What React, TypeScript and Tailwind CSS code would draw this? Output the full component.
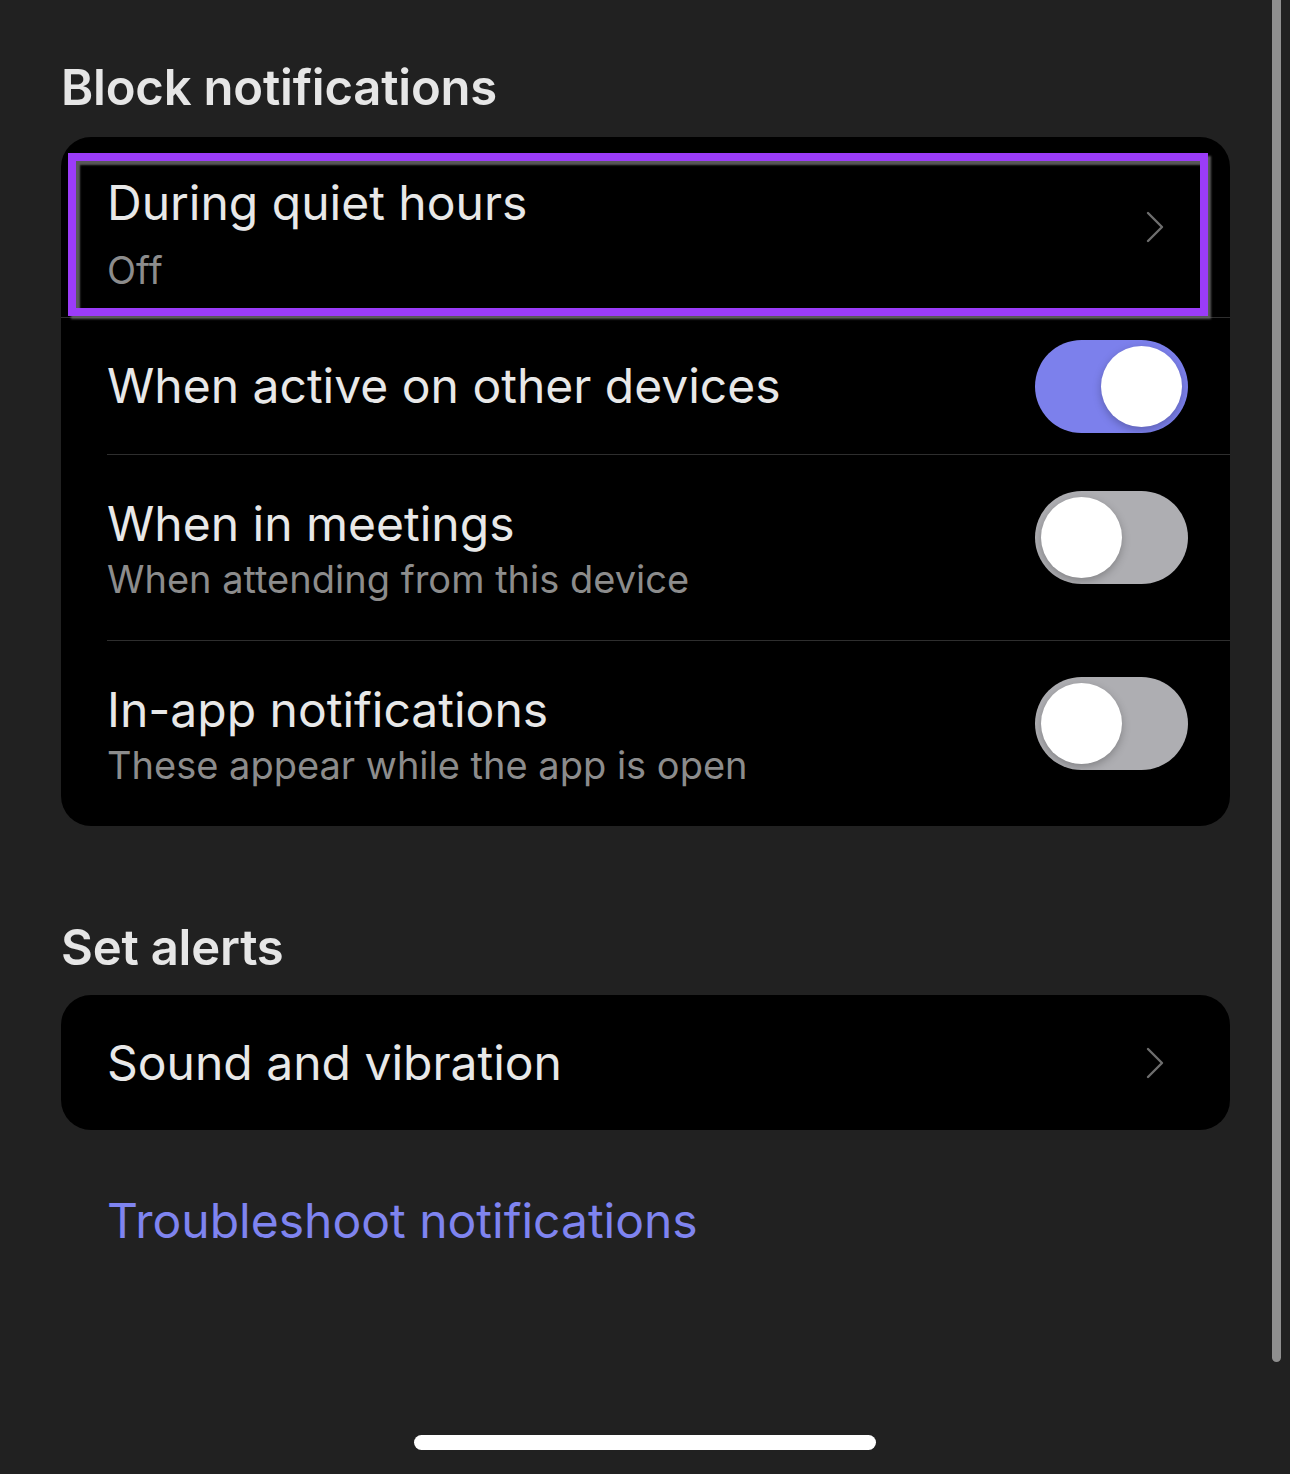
import React from "react";

const font = { fontFamily: "Inter, 'Noto Sans', sans-serif" };

function Toggle({ on }: { on: boolean }) {
  return (
    <div
      className={`relative h-[93px] w-[153px] shrink-0 rounded-full ${on ? "bg-[#7c80ec]" : "bg-[#aeaeb2]"}`}
    >
      <div
        className={`absolute top-[6px] h-[81px] w-[81px] rounded-full bg-white shadow-[0_3px_8px_rgba(0,0,0,0.25)] ${on ? "right-[6px]" : "left-[6px]"}`}
      />
    </div>
  );
}

function Chevron() {
  return (
    <svg width="18" height="32" viewBox="0 0 18 32" className="shrink-0">
      <path d="M2 2 L16 16 L2 30" fill="none" stroke="#6e6e6e" strokeWidth="2.4" strokeLinecap="round" strokeLinejoin="round" />
    </svg>
  );
}

export default function App() {
  return (
    <div className="relative h-[1474px] w-[1290px] overflow-hidden bg-[#212121] text-[#e8e8e8]" style={font}>
      <div className="flex flex-col pl-[61px] pr-[60px]">
        <h2 className="mt-[59px] text-[49px] font-semibold leading-[58px] tracking-[-0.2px] text-[#e6e6e6]">
          Block notifications
        </h2>
        <div className="mt-[20px] flex flex-col rounded-[30px] bg-black">
          {/* Row 1 */}
          <div className="relative flex h-[181px] items-center border-b border-[#2e2e2e] pl-[46px] pr-[66px]">
            <div className="flex flex-1 flex-col pt-[12px]">
              <div className="text-[48px] leading-[56px]">During quiet hours</div>
              <div className="mt-[17px] text-[38px] leading-[44px] text-[#8c8c8c]">Off</div>
            </div>
            <Chevron />
            <div className="pointer-events-none absolute left-[7px] top-[16px] h-[163px] w-[1140px] border-[8px] border-[#9b3cf8] shadow-[3px_3px_2px_rgba(110,110,110,0.8),inset_4px_4px_2px_rgba(110,110,110,0.8)]" />
          </div>
          {/* Row 2 */}
          <div className="flex h-[136px] items-center pl-[46px] pr-[42px]">
            <div className="flex-1 text-[48px] leading-[56px]">When active on other devices</div>
            <Toggle on />
          </div>
          <div className="ml-[46px] h-px bg-[#2e2e2e]" />
          {/* Row 3 */}
          <div className="flex h-[185px] items-center pl-[46px] pr-[42px]">
            <div className="flex flex-1 flex-col pt-[3px]">
              <div className="text-[48px] leading-[56px]">When in meetings</div>
              <div className="mt-[4px] text-[38px] leading-[46px] text-[#8c8c8c]">When attending from this device</div>
            </div>
            <div className="mb-[20px]">
              <Toggle on={false} />
            </div>
          </div>
          <div className="ml-[46px] h-px bg-[#2e2e2e]" />
          {/* Row 4 */}
          <div className="flex h-[185px] items-center pl-[46px] pr-[42px]">
            <div className="flex flex-1 flex-col pt-[3px]">
              <div className="text-[48px] leading-[56px]">In-app notifications</div>
              <div className="mt-[4px] text-[38px] leading-[46px] text-[#8c8c8c]">These appear while the app is open</div>
            </div>
            <div className="mb-[20px]">
              <Toggle on={false} />
            </div>
          </div>
        </div>

        <h2 className="mt-[93px] text-[49px] font-semibold leading-[58px] tracking-[-0.2px] text-[#e6e6e6]">
          Set alerts
        </h2>
        <div className="mt-[18px] flex h-[135px] items-center rounded-[30px] bg-black pl-[46px] pr-[66px]">
          <div className="flex-1 text-[48px] leading-[56px]">Sound and vibration</div>
          <Chevron />
        </div>

        <div className="mt-[63px] pl-[46px] text-[48px] leading-[56px] text-[#7f84f0]">Troubleshoot notifications</div>
      </div>

      {/* home indicator */}
      <div className="absolute bottom-[24px] left-[414px] h-[15px] w-[462px] rounded-full bg-white" />
      {/* scrollbar */}
      <div className="absolute right-[9px] top-0 h-[1362px] w-[9px] rounded-b-full bg-[#8f8f8f]" />
    </div>
  );
}
